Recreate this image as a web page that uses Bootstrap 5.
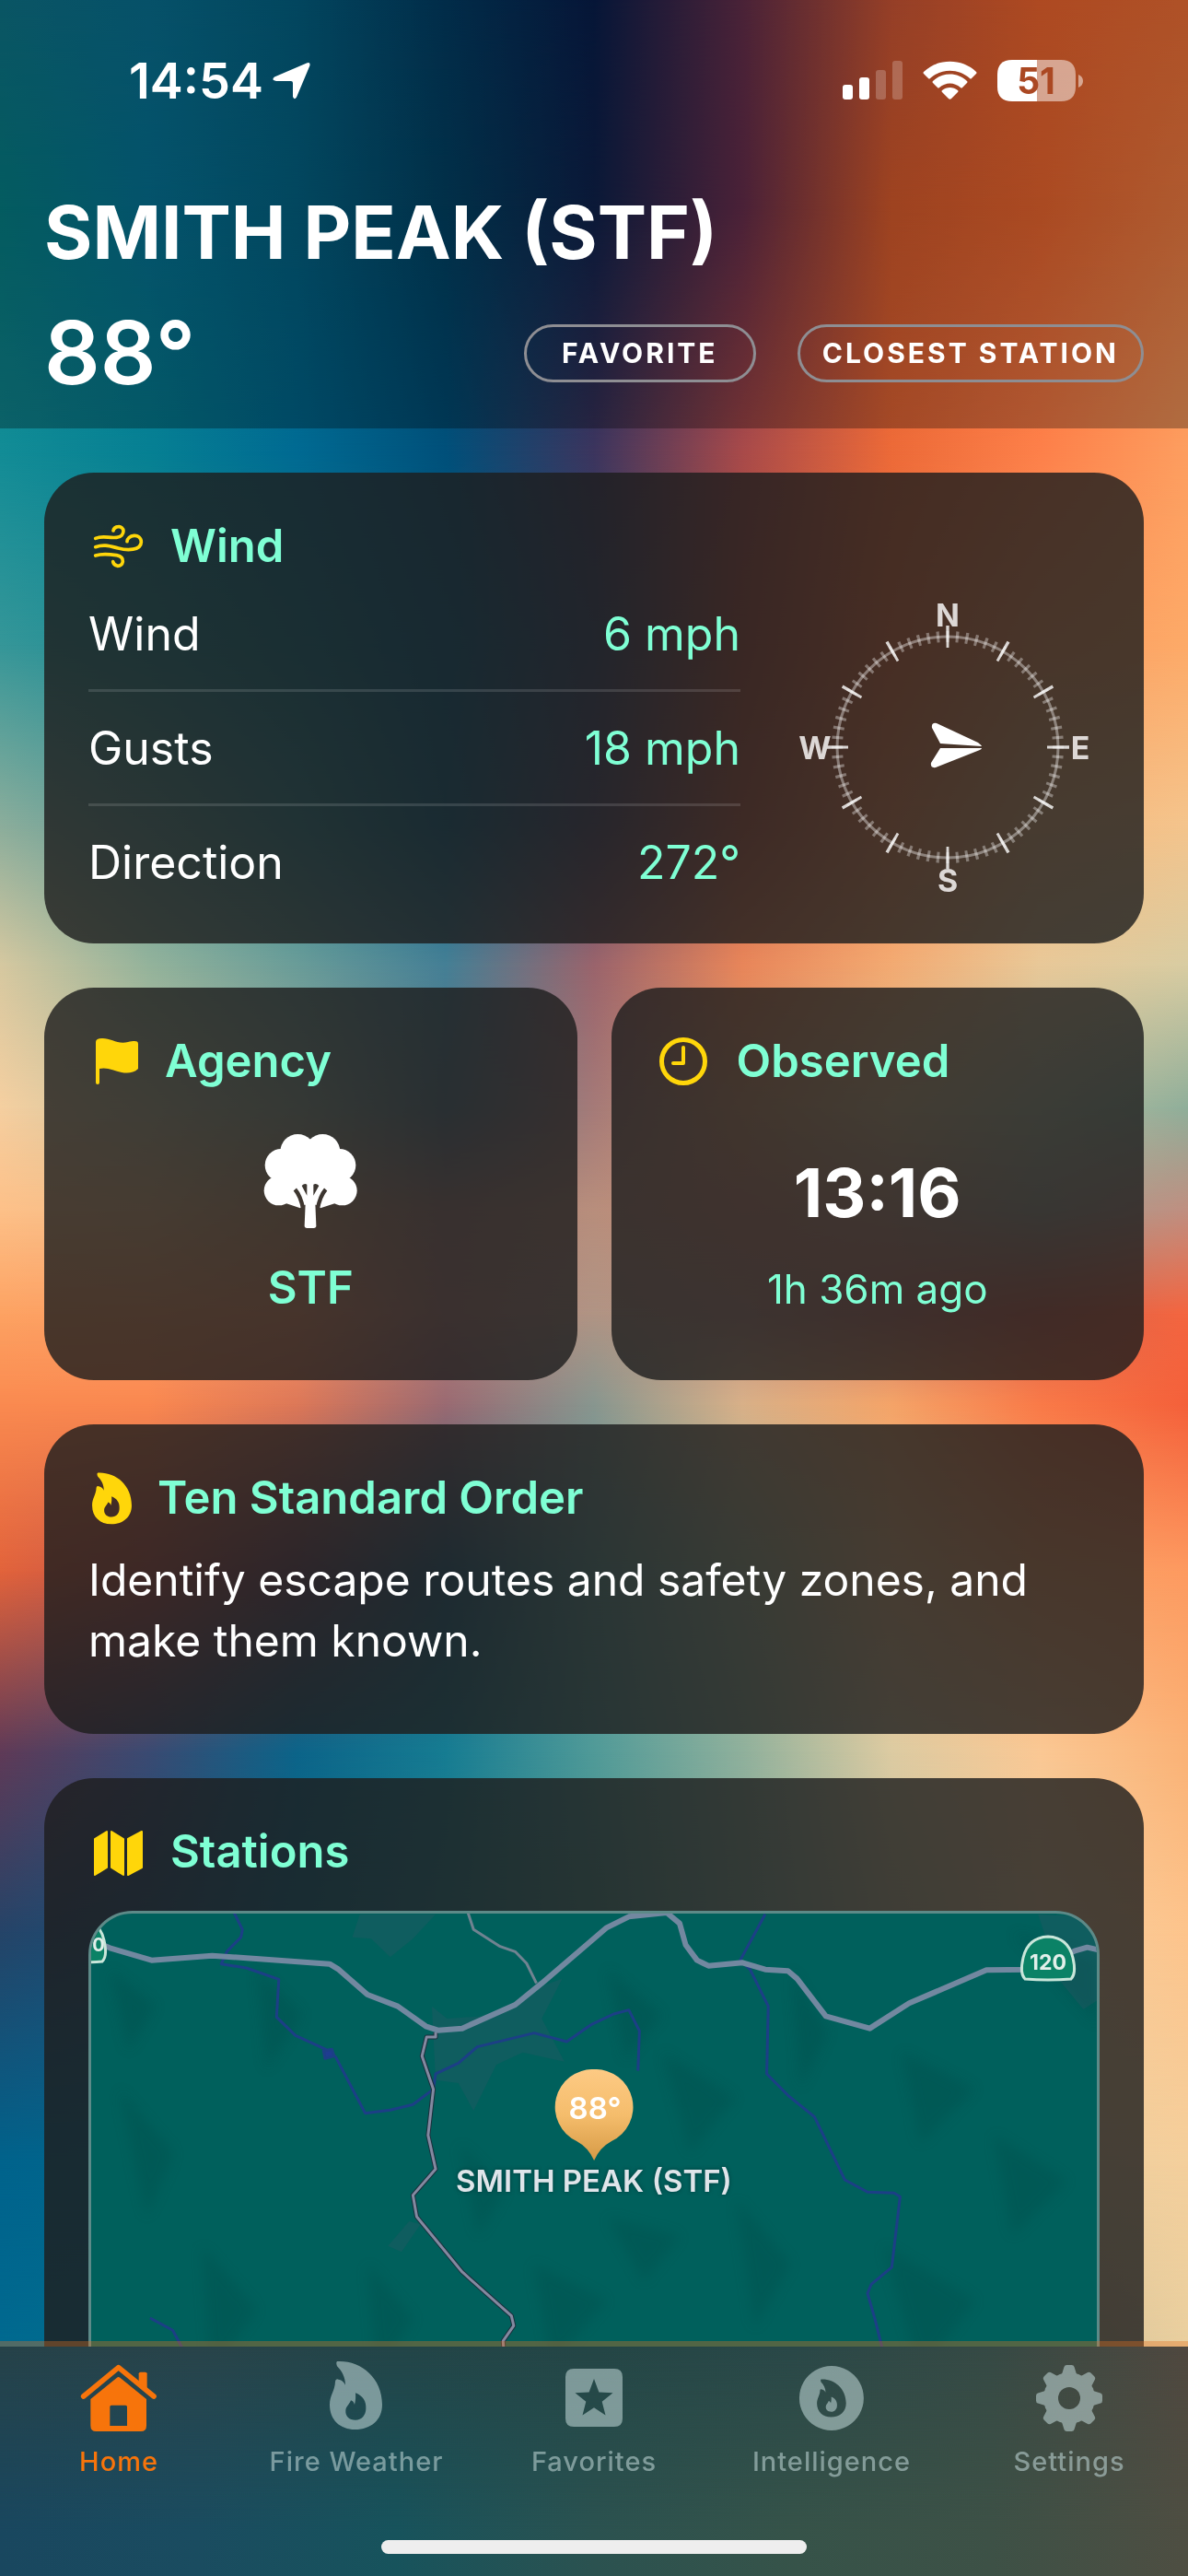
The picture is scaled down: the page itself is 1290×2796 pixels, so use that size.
<!DOCTYPE html>
<html lang="en">
<head>
<meta charset="utf-8">
<meta name="viewport" content="width=device-width, initial-scale=1">
<title>Smith Peak (STF)</title>
<link href="https://cdn.jsdelivr.net/npm/bootstrap@5.3.0/dist/css/bootstrap.min.css" rel="stylesheet">
<style>
  :root { --mint: #7fffd4; --gold: #ffd60a; --tile: rgba(30, 30, 30, .81); }
  body { font-family: Inter, "Liberation Sans", sans-serif; font-size: 49px; line-height: 60px; color: #fff; background: #0a6a8d; }
  .sky { inset: 0; z-index: -1; }
  .sky div { position: absolute; inset: 0; -webkit-mask-image: linear-gradient(transparent var(--a), #000 var(--b)); mask-image: linear-gradient(transparent var(--a), #000 var(--b)); }
  .topbar { background: rgba(0, 0, 0, .3); padding: 0 48px 22px; }
  .status { height: 176px; padding: 0 65px 0 92px; font-size: 54px; }
  .station-name { font-size: 80px; line-height: 96px; margin: 28px 0 23px; }
  .temp { font-size: 95px; line-height: 120px; }
  .pill { height: 63px; padding: 0 24px; border: 3px solid #8e8e93; border-radius: 32px; color: #fff; background: none; font-size: 30px; line-height: 1; letter-spacing: 3px; min-width: 252px; }
  .pills { gap: 45px; }
  .feed { padding: 48px; gap: 48px; overflow: hidden; }
  .tile { background: var(--tile); border-radius: 54px; padding: 50px 48px 25px; min-width: 0; }
  .tile h2 { font-size: 49px; line-height: 60px; color: var(--mint); margin: 0; gap: 28px; }
  .tile h2 svg { height: 60px; color: var(--gold); flex: none; }
  .mint { color: var(--mint); }
  .readings { margin: 4px 0 0; gap: 60px; font-size: 50px; }
  .readings dl { margin: 0; }
  .readings dl div { height: 124px; border-bottom: 3px solid rgba(255, 255, 255, .13); }
  .readings dl div:last-child { border-color: transparent; }
  .readings dt { font-weight: 400; }
  .compass { width: 330px; flex: none; }
  .pair { gap: 37px; }
  .pair .tile { padding-bottom: 69px; }
  .tree { width: 102px; margin: 49px 0 35px; }
  .clock-time { font-size: 73px; line-height: 88px; margin: 69px 0 30px; }
  .ago { font-size: 44px; }
  .order { font-size: 48px; line-height: 66px; margin: 26px 0 43px; }
  .map { margin-top: 34px; height: 760px; border: 3px solid #5d8a88; border-radius: 48px; background: #00605c; }
  .map > svg { width: 100%; height: 100%; }
  .pin { left: 50%; top: 169px; transform: translateX(-50%); font-size: 33px; line-height: 40px; color: #dfe5ea; text-shadow: 0 0 4px #003c3c; }
  .pin svg { width: 100px; height: 101px; }
  .tabs { height: 249px; z-index: 2; box-shadow: 0 -6px 0 rgba(225, 110, 30, .36); padding-top: 14px; background: linear-gradient(90deg, #264249, #29444a, #234548, #244646, #2a4848, #364a45, #50483f); }
  .tabs::before { content: ""; position: absolute; inset: 0; z-index: -1; background: linear-gradient(90deg, #19475f, #1a4c60, #17535c, #2b5250, #365349, #3d5146, #4e4e42); -webkit-mask-image: linear-gradient(transparent, #000 80%); mask-image: linear-gradient(transparent, #000 80%); }
  .tabs a { color: rgba(190, 212, 212, .58); font-size: 29px; line-height: 40px; letter-spacing: 1px; gap: 7px; flex: 1 1 0; text-decoration: none; }
  .tabs a.active { color: #f7740b; }
  .tabs svg { width: 84px; height: 84px; }
  .grip { left: 50%; bottom: 24px; width: 462px; height: 15px; transform: translateX(-50%); border-radius: 8px; background: #eee; }
</style>
</head>
<body>
<svg width="0" height="0" class="position-absolute" aria-hidden="true">
  <symbol id="flame" viewBox="875 89 187 239"><path fill="currentColor" fill-rule="evenodd" d="M916 99C990 95 1062 150 1062 240C1062 290 1025 321 974 321C925 321 891 290 891 240C891 210 908 195 909 165Q910 154 920 158C932 160 938 168 942 176C942 150 930 130 915 115Q910 101 916 99ZM975 202C1000 212 1010 230 1009 252C1009 275 995 290 975 290C955 290 942 278 943 260C943 246 955 240 960 226C966 228 970 232 972 240C976 225 976 215 975 202Z"/></symbol>
</svg>

<div class="sky position-fixed" aria-hidden="true">
  <div style="--a:-2%;--b:-1%;background:linear-gradient(90deg,#0f7a90,#0a7597,#046588,#034069,#0a2050,#6a3250,#d65b39,#f96a31,#fb7539)"></div>
  <div style="--a:0%;--b:8%;background:linear-gradient(90deg,#06848a,#06779a,#046688,#024568,#102450,#6a3050,#e2602f,#f46a31,#fb8245)"></div>
  <div style="--a:8%;--b:17.5%;background:linear-gradient(90deg,#128c96,#068093,#006a92,#00507a,#3c355e,#a84a4a,#ec6a38,#fd804a,#fd9e60)"></div>
  <div style="--a:17.5%;--b:25%;background:linear-gradient(90deg,#359698,#1e8c95,#0c7890,#005c85,#35466a,#b0503f,#f87440,#fc9c60,#fdaa68)"></div>
  <div style="--a:25%;--b:32%;background:linear-gradient(90deg,#8bad9b,#5e9c98,#2f8a95,#0c6487,#504a6a,#c46048,#fb9058,#f7ba80,#f4c48c)"></div>
  <div style="--a:32%;--b:37.5%;background:linear-gradient(90deg,#d6c8a0,#94b39b,#6a9c98,#457f95,#9a646c,#e8865a,#f2aa72,#e8c898,#d8cca2)"></div>
  <div style="--a:37.5%;--b:43%;background:linear-gradient(90deg,#f5cfa0,#cbc5a0,#9aac9a,#5a7a8a,#a57a78,#d89a70,#e0bf90,#b8bfa0,#8fae9a)"></div>
  <div style="--a:43%;--b:47%;background:linear-gradient(90deg,#fdc088,#f2bc88,#d0a078,#a8807a,#b88e7c,#cc8a74,#c89880,#a8a090,#c08e80)"></div>
  <div style="--a:47%;--b:51%;background:linear-gradient(90deg,#fda262,#fc9e66,#f49468,#b5807a,#b09484,#c09080,#c8786a,#d8644e,#f4653f)"></div>
  <div style="--a:51%;--b:54.5%;background:linear-gradient(90deg,#fa8a50,#fa8850,#dd7858,#9a6a72,#88968f,#d8b088,#f4a468,#f97a48,#f4603a)"></div>
  <div style="--a:54.5%;--b:61%;background:linear-gradient(90deg,#e2633b,#c4554a,#70485e,#206080,#5f9c98,#a8b898,#f0bd88,#fca468,#fd9a60)"></div>
  <div style="--a:61%;--b:68%;background:linear-gradient(90deg,#5f3a57,#3a4a72,#0c6489,#167c92,#509a98,#8fb09c,#dccba2,#fac894,#fab276)"></div>
  <div style="--a:68%;--b:75%;background:linear-gradient(90deg,#254468,#1a5078,#066c8c,#208090,#48958f,#86ae9c,#c8c4a0,#f6d0a0,#fdc48c)"></div>
  <div style="--a:75%;--b:84%;background:linear-gradient(90deg,#00638c,#00688e,#087088,#208090,#48958f,#86ae9c,#c8c4a0,#ecd0a0,#f4cf9c)"></div>
  <div style="--a:84%;--b:92%;background:linear-gradient(90deg,#006a90,#00708e,#087088,#208090,#48958f,#86ae9c,#b8b898,#d0c09a,#e8cf9f)"></div>
</div>

<div class="d-flex flex-column vh-100">
  <header class="topbar">
    <div class="status d-flex align-items-center justify-content-between fw-semibold">
      <div class="d-flex align-items-center gap-2">
        <time>14:54</time>
        <svg width="46" height="42" viewBox="0 0 46 42" fill="#fff" aria-hidden="true"><path d="M39 1.500Q43 0 42.500 4L28 38.500Q25.500 42 24 38V23Q24 21 22 21H6Q0 20 4 16.500Z"/></svg>
      </div>
      <svg width="262" height="46" viewBox="0 0 262 46" fill="#fff" role="img" aria-label="Signal, Wi-Fi, battery">
        <rect y="27" width="11" height="16" rx="3"/><rect x="18" y="19" width="11" height="24" rx="3"/>
        <g opacity=".22"><rect x="36" y="11" width="11" height="32" rx="3"/><rect x="54" y="1" width="11" height="42" rx="3"/></g>
        <path d="M88 13C103-2 130-2 145 13Q146 14 145 15L140 20Q139 21 138 20C126 9 107 9 95 20Q94 21 93 20L88 15Q87 14 88 13ZM98 23C108 13 125 13 135 23Q136 24 135 25L130 30Q129 31 128 30C121 24 112 24 105 30Q104 31 103 30L98 25Q97 24 98 23ZM108 33C113 29 120 29 125 33Q126 34 125 35L118 42Q116.500 43.500 115 42L108 35Q107 34 108 33Z"/>
        <path d="M184 0H211V45H184Q168 45 168 29V16Q168 0 184 0Z"/>
        <path opacity=".5" d="M211 0H237Q253 0 253 16V29Q253 45 237 45H211ZM256 16Q261 18 261 23Q261 28 256 30Z"/>
        <text x="210" y="37" font-size="39" font-weight="700" text-anchor="middle" fill="#ab4823">51</text>
      </svg>
    </div>
    <h1 class="station-name fw-bold">SMITH PEAK (STF)</h1>
    <div class="d-flex align-items-center justify-content-between">
      <div class="temp fw-semibold">88°</div>
      <div class="pills d-flex">
        <button type="button" class="pill fw-bold">FAVORITE</button>
        <button type="button" class="pill fw-bold">CLOSEST STATION</button>
      </div>
    </div>
  </header>

  <main class="feed d-flex flex-column flex-grow-1">
    <section class="tile flex-shrink-0">
      <h2 class="d-flex align-items-center fw-semibold">
        <svg viewBox="48 36 183 180" fill="none" stroke="currentColor" stroke-width="11" stroke-linecap="round" aria-hidden="true"><path d="M71 100C95 90 115 100 140 97C155 96 162 86 162 76C162 68 154 61 146 62C136 63 130 69 129 75M71 128C100 118 120 126 145 132C175 140 219 140 220 112C220 98 208 90 197 91C183 92 174 102 174 110M71 156C95 148 120 152 140 155C155 158 161 166 160 176C158 186 150 190 143 190C134 188 129 182 128 176"/></svg>
        Wind
      </h2>
      <div class="readings d-flex align-items-center">
        <dl class="flex-grow-1">
          <div class="d-flex align-items-center justify-content-between"><dt>Wind</dt><dd class="mint m-0">6 mph</dd></div>
          <div class="d-flex align-items-center justify-content-between"><dt>Gusts</dt><dd class="mint m-0">18 mph</dd></div>
          <div class="d-flex align-items-center justify-content-between"><dt>Direction</dt><dd class="mint m-0">272°</dd></div>
        </dl>
        <svg class="compass" viewBox="-165 -163 330 330" role="img" aria-label="Wind from 272 degrees">
          <g fill="none" stroke="#fff">
            <circle r="120" stroke-width="3" opacity=".38"/>
            <circle r="120" stroke-width="12" opacity=".35" pathLength="720" stroke-dasharray="3 7" stroke-dashoffset="1.500"/>
            <circle r="120" stroke-width="24" opacity=".8" pathLength="720" stroke-dasharray="3 57" stroke-dashoffset="1.500"/>
          </g>
          <g fill="#ddd8d6" font-size="34" font-weight="700" text-anchor="middle"><text y="-131">N</text><text y="157">S</text><text x="-144" y="13">W</text><text x="144" y="13">E</text></g>
          <path fill="#fff" d="M37-1L-8-4L-17-21Q-18-27-12-26L33-5Q37-2 37-1ZM37 1L-8 1L-18 17Q-19 23-13 22L35 3Q37 2 37 1Z"/>
        </svg>
      </div>
    </section>

    <div class="pair d-flex flex-shrink-0">
      <section class="tile col">
        <h2 class="d-flex align-items-center fw-semibold">
          <svg viewBox="0 0 55 60" fill="currentColor" aria-hidden="true"><path d="M8 9Q8 5 15 5C25 5 32 12 43 9C49 8 54 7 54 11V38C49 43 42 43 36 42C28 40 20 36 12 38V53Q12 55 10 55T8 53Z"/></svg>
          Agency
        </h2>
        <div class="d-flex flex-column align-items-center">
          <svg class="tree" viewBox="50 60 306 306" fill="#fff" aria-hidden="true">
            <mask id="bark"><path fill="#fff" d="M40 50H366V376H40Z"/><path fill="none" stroke="#000" stroke-width="13" d="M153 240Q172 262 180 306M253 240Q234 262 226 306"/><path fill="#000" d="M175 228Q184 218 192 224V260ZM231 228Q222 218 213 224V260Z"/></mask>
            <g mask="url(#bark)"><circle cx="162" cy="117" r="57"/><circle cx="243" cy="117" r="57"/><circle cx="108" cy="161" r="53"/><circle cx="298" cy="161" r="53"/><circle cx="100" cy="244" r="48"/><circle cx="307" cy="244" r="48"/><path d="M100 130H306V286H282L236 301L222 290H184L170 301L125 286H100Z"/></g>
            <path d="M187 285H219L222 358Q222 366 214 366H192Q184 366 184 358Z"/>
          </svg>
          <div class="mint fw-semibold">STF</div>
        </div>
      </section>
      <section class="tile col">
        <h2 class="d-flex align-items-center fw-semibold">
          <svg viewBox="0 0 60 60" fill="none" stroke="currentColor" stroke-linecap="round" stroke-linejoin="round" aria-hidden="true"><circle cx="30" cy="30" r="23.500" stroke-width="5"/><path stroke-width="4" d="M30 15V32H19"/></svg>
          Observed
        </h2>
        <div class="text-center">
          <div class="clock-time fw-bold">13:16</div>
          <div class="ago mint">1h 36m ago</div>
        </div>
      </section>
    </div>

    <section class="tile flex-shrink-0">
      <h2 class="d-flex align-items-center fw-semibold"><svg width="47" aria-hidden="true"><use href="#flame"/></svg>Ten Standard Order</h2>
      <p class="order">Identify escape routes and safety zones, and make them known.</p>
    </section>

    <section class="tile flex-shrink-0">
      <h2 class="d-flex align-items-center fw-semibold">
        <svg viewBox="0 0 61 60" fill="currentColor" stroke="currentColor" stroke-width="2" stroke-linejoin="round" aria-hidden="true"><path d="M7 16L20 8V47L7 55ZM25 8L38 16V55L25 47ZM43 16L58 8V47L43 55Z"/></svg>
        Stations
      </h2>
      <div class="map position-relative overflow-hidden">
        <svg class="d-block" viewBox="0 0 1092 754" preserveAspectRatio="xMidYMin slice" aria-hidden="true">
          <defs>
            <filter id="soft"><feGaussianBlur stdDeviation="7"/></filter>
          </defs>
          <g fill="#003f3e" opacity=".2" filter="url(#soft)">
            <path d="M30 190L90 260L60 330ZM180 60L230 110L190 170ZM300 380L350 440L310 500ZM480 380L560 420L500 490ZM620 150L700 200L650 260ZM760 60L800 130L770 190ZM880 150L960 190L900 250ZM980 240L1060 290L1000 350ZM700 310L760 380L720 450ZM860 360L960 420L900 500ZM120 360L180 430L130 500ZM400 250L450 300L420 350ZM560 60L620 110L580 160ZM1000 20L1092 50L1092 120ZM20 60L70 100L40 150ZM560 330L640 350L600 400Z"/>
          </g>
          <g fill="none" stroke-linejoin="round" transform="translate(-99 -36) scale(.8227 .3333)">
            <path fill="#3a5566" fill-opacity=".25" d="M475 110L575 110L545 190L515 250L490 190L465 185ZM570 410L590 450L650 440L720 340L742 320L715 450L745 590L690 560L655 600L625 750L605 660L575 650ZM1370 110L1450 120L1455 380L1430 420L1400 330ZM540 1110L555 1120L530 1210L512 1190Z"/>
            <g stroke="#1c3f86" stroke-width="3">
              <path vector-effect="non-scaling-stroke" d="M308 100L320 160L318 185L300 230L292 272L325 285L368 322L365 445L390 505L430 550L443 575L482 758L515 748L545 730L572 680L575 630L605 595L630 542L705 497L748 525L780 470L810 435L830 422L844 490L842 620"/>
              <path vector-effect="non-scaling-stroke" d="M1010 110L977 260L990 290L1014 410L1012 630L1040 700L1075 770L1115 975L1145 1015L1180 1018L1188 1030L1177 1260L1150 1315L1145 1345L1155 1430L1166 1540M198 1425L228 1465L240 1520L245 1600"/>
              <path fill="#1f3c90" vector-effect="non-scaling-stroke" d="M427 555L438 550L441 572L429 580Z"/>
            </g>
            <path stroke="#708391" stroke-width="3" vector-effect="non-scaling-stroke" d="M617 100L625 160L660 215L680 232L695 270L708 335"/>
            <path stroke="#1b2f3c" stroke-width="5" vector-effect="non-scaling-stroke" d="M575 495L575 510L563 510L557 572L572 680L565 830L575 940L545 1025L550 1095L610 1275L675 1418L678 1450L664 1500L667 1600"/>
            <path stroke="#8389a0" stroke-width="3" vector-effect="non-scaling-stroke" d="M575 495L575 510L563 510L557 572L572 680L565 830L575 940L545 1025L550 1095L610 1275L675 1418L678 1450L664 1500L667 1600"/>
            <path stroke="#7288a0" stroke-width="6" vector-effect="non-scaling-stroke" d="M115 190L145 220L200 260L280 245L435 272L447 290L485 372L525 410L562 475L578 488L610 482L680 405L715 335L800 155L830 118L880 105L897 140L905 210L920 260L935 278L980 268L1010 290L1040 295L1052 320L1090 442L1148 482L1200 400L1302 292L1360 290L1418 230L1435 218L1460 232"/>
          </g>
          <g stroke="#c9e6da" stroke-width="3" fill="#0b8266">
            <path id="shield" d="M1014 71Q1008 65 1012 48Q1017 26 1039 25Q1061 26 1066 48Q1070 65 1064 71Q1039 73 1014 71Z"/>
            <use href="#shield" x="-1052" y="-19"/>
          </g>
          <g fill="#e2efea" font-size="23" font-weight="700" text-anchor="middle"><text x="1039" y="61">120</text><text x="8" y="41" font-size="20">0</text></g>
        </svg>
        <div class="pin position-absolute text-center text-nowrap fw-semibold">
          <svg viewBox="0 0 100 101" class="d-block mx-auto" role="img" aria-label="88 degrees">
            <defs><linearGradient id="peach" x1="0" y1="0" x2="0" y2="1"><stop offset="0" stop-color="#fdca84"/><stop offset=".5" stop-color="#f5bd6c"/><stop offset="1" stop-color="#d69a46"/></linearGradient></defs>
            <path fill="url(#peach)" d="M50 0A41 41 0 0 1 69 78Q56 85 50 99Q44 85 31 78A41 41 0 0 1 50 0Z"/>
            <text x="51" y="54" fill="#fff" font-size="33" text-anchor="middle" style="text-shadow:none">88°</text>
          </svg>
          SMITH PEAK (STF)
        </div>
      </div>
    </section>
  </main>

  <nav class="tabs position-relative d-flex align-items-start flex-shrink-0">
    <a href="#home" class="active d-flex flex-column align-items-center fw-medium" aria-current="page">
      <svg viewBox="78 93 252 252" fill="currentColor" aria-hidden="true"><path fill="none" stroke="currentColor" stroke-width="17" stroke-linecap="round" stroke-linejoin="round" d="M89 213L203 119L318 213"/><path d="M269 170V139Q269 134 275 134H290Q296 134 296 139V194Z"/><path fill-rule="evenodd" d="M112 222L198 152Q203 148 208 152L294 222V308Q294 327 276 327H130Q112 327 112 308ZM180 242Q175 242 175 247V309H231V247Q231 242 226 242Z"/></svg>
      Home
    </a>
    <a href="#fire-weather" class="d-flex flex-column align-items-center fw-medium">
      <svg viewBox="852 93 252 252" aria-hidden="true"><use href="#flame" x="875" y="89" width="187" height="239"/></svg>
      Fire Weather
    </a>
    <a href="#favorites" class="d-flex flex-column align-items-center fw-medium">
      <svg viewBox="0 0 84 84" fill="currentColor" aria-hidden="true"><path fill-rule="evenodd" d="M20 10H64Q73 10 73 19V64Q73 73 64 73H20Q11 73 11 64V19Q11 10 20 10ZM42 21L36.600 35.600L21.500 36.200L33.300 45.800L29.500 60.500L42 52.200L54.500 60.500L50.700 45.800L62.500 36.200L47.400 35.600Z"/></svg>
      Favorites
    </a>
    <a href="#intelligence" class="d-flex flex-column align-items-center fw-medium">
      <svg viewBox="750 -17 454 454" fill="currentColor" aria-hidden="true"><path fill-rule="evenodd" d="M977 21A189 189 0 1 1 976 21ZM916 99C990 95 1062 150 1062 240C1062 290 1025 321 974 321C925 321 891 290 891 240C891 210 908 195 909 165Q910 154 920 158C932 160 938 168 942 176C942 150 930 130 915 115Q910 101 916 99ZM975 202C1000 212 1010 230 1009 252C1009 275 995 290 975 290C955 290 942 278 943 260C943 246 955 240 960 226C966 228 970 232 972 240C976 225 976 215 975 202Z"/></svg>
      Intelligence
    </a>
    <a href="#settings" class="d-flex flex-column align-items-center fw-medium">
      <svg viewBox="0 0 84 84" aria-hidden="true">
        <mask id="hub" fill="#fff"><circle cx="42" cy="42" r="28"/><path id="cog" d="M34 16L36.500 8Q37 6 39.500 6H44.500Q47 6 47.500 8L50 16V68L47.500 76Q47 78 44.500 78H39.500Q37 78 36.500 76L34 68Z"/><use href="#cog" transform="rotate(45 42 42)"/><use href="#cog" transform="rotate(90 42 42)"/><use href="#cog" transform="rotate(135 42 42)"/><circle cx="42" cy="42" r="12" fill="#000"/></mask>
        <path fill="currentColor" mask="url(#hub)" d="M0 0H84V84H0Z"/>
      </svg>
      Settings
    </a>
    <div class="grip position-absolute" aria-hidden="true"></div>
  </nav>
</div>
<script src="https://cdn.jsdelivr.net/npm/bootstrap@5.3.0/dist/js/bootstrap.bundle.min.js"></script>
</body>
</html>
